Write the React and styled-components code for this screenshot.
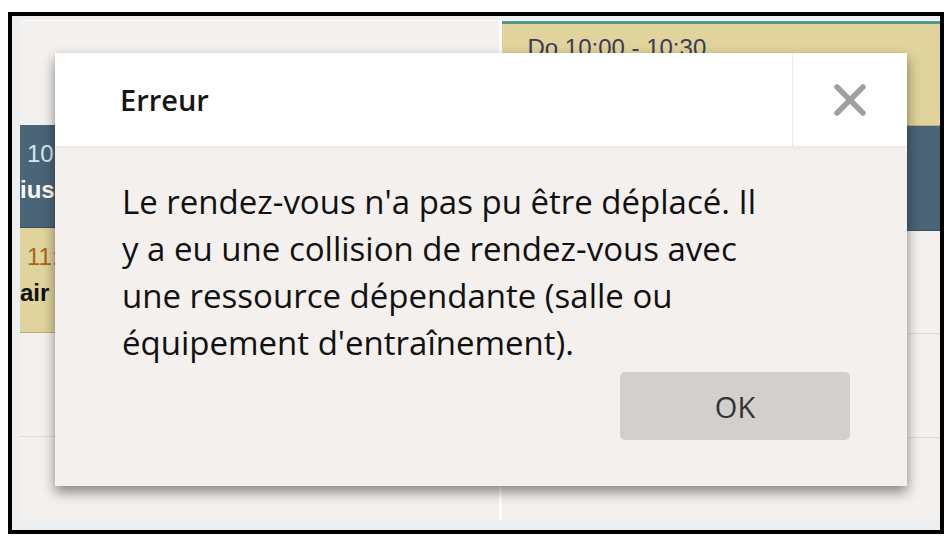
import React from "react";
import styled, { createGlobalStyle } from "styled-components";

const GlobalStyle = createGlobalStyle`
  body {
    margin: 0;
    background: #ffffff;
    font-family: "Open Sans", "Liberation Sans", sans-serif;
  }
`;

const Page = styled.div`
  position: relative;
  width: 952px;
  height: 550px;
  padding: 12px 0 0 8px;
  box-sizing: border-box;
`;

const Frame = styled.div`
  width: 936px;
  height: 522px;
  box-sizing: border-box;
  border: 4px solid #000;
  background: #eceef0;
  padding: 4px 0 10px 8px;
  display: flex;
`;

const Column = styled.div`
  width: ${(p) => p.width}px;
  display: flex;
  flex-direction: column;
  background: #f3f0ed;
  border-left: ${(p) => (p.divider ? "3px solid #ffffff" : "none")};
  border-top: 1px solid #fbfaf9;
  overflow: hidden;
`;

const Slot = styled.div`
  height: ${(p) => p.h}px;
  flex: ${(p) => (p.fill ? 1 : "none")};
  border-bottom: ${(p) => (p.line ? "1px solid #dedad7" : "none")};
  box-sizing: border-box;
`;

const Event = styled.div`
  height: ${(p) => p.h}px;
  box-sizing: border-box;
  background: ${(p) => (p.tone === "blue" ? "#4a6478" : "#e0d39b")};
  border-top: ${(p) => (p.accent ? "3px solid #4f9a8c" : "none")};
  border-bottom: 1px solid
    ${(p) => (p.tone === "blue" ? "#3a4f60" : "#bcae72")};
  padding: ${(p) => (p.accent ? "12px 0 0 25px" : "17px 0 0 0")};
  display: flex;
  flex-direction: column;
  gap: 12px;
  font-family: "Liberation Sans", Arial, sans-serif;
`;

const EventTime = styled.span`
  font-size: 24px;
  line-height: 1;
  color: ${(p) => p.color};
  padding-left: ${(p) => (p.large ? 0 : 7)}px;
  white-space: nowrap;
`;

const EventName = styled.span`
  font-size: 24px;
  font-weight: 700;
  line-height: 1;
  color: ${(p) => p.color};
  white-space: nowrap;
`;

const Dialog = styled.div`
  position: absolute;
  left: 55px;
  top: 53px;
  width: 852px;
  height: 433px;
  background: #f3f0ed;
  box-shadow: 0 6px 12px rgba(0, 0, 0, 0.45);
  display: flex;
  flex-direction: column;
`;

const Header = styled.div`
  height: 93px;
  display: flex;
  background: #ffffff;
  box-shadow: 0 2px 4px rgba(0, 0, 0, 0.04);
  position: relative;
`;

const Title = styled.h2`
  flex: 1;
  margin: 0;
  padding-left: 65px;
  font-family: "Open Sans", sans-serif;
  font-weight: 600;
  font-size: 29px;
  line-height: 93px;
  color: #151515;
`;

const CloseButton = styled.button`
  width: 115px;
  border: 0;
  border-left: 1px solid #e8e8e8;
  background: #ffffff;
  display: grid;
  place-content: center;
  padding: 0;
`;

const Body = styled.div`
  flex: 1;
  padding: 32px 57px 46px 67px;
  display: flex;
  flex-direction: column;
`;

const Message = styled.p`
  margin: 0;
  font-family: "Open Sans", sans-serif;
  font-size: 33px;
  line-height: 47px;
  color: #111111;
`;

const Footer = styled.div`
  margin-top: auto;
  display: flex;
  justify-content: flex-end;
`;

const OkButton = styled.button`
  width: 230px;
  height: 68px;
  border: 0;
  border-radius: 5px;
  background: #d3cfcc;
  font-family: "Open Sans", sans-serif;
  font-size: 29px;
  color: #333333;
`;

const CloseIcon = () => (
  <svg width="36" height="34" viewBox="0 0 36 34">
    <path
      d="M5 4 L31 30 M31 4 L5 30"
      stroke="#a0a0a0"
      strokeWidth="5.5"
      strokeLinecap="round"
      fill="none"
    />
  </svg>
);

export default function App() {
  return (
    <Page>
      <GlobalStyle />
      <Frame>
        <Column width={481}>
          <Slot h={104} />
          <Event h={103} tone="blue">
            <EventTime color="#d6e6f2">10:00</EventTime>
            <EventName color="#ffffff">ius</EventName>
          </Event>
          <Event h={105} tone="yellow">
            <EventTime color="#b0601c">11:00</EventTime>
            <EventName color="#111111">air</EventName>
          </Event>
          <Slot h={104} line />
          <Slot fill />
        </Column>
        <Column width={439} divider>
          <Event h={105} tone="yellow" accent>
            <EventTime large color="#3e3a58">
              Do 10:00 - 10:30
            </EventTime>
          </Event>
          <Event h={105} tone="blue" />
          <Slot h={103} line />
          <Slot h={104} line />
          <Slot fill />
        </Column>
      </Frame>

      <Dialog>
        <Header>
          <Title>Erreur</Title>
          <CloseButton aria-label="Fermer">
            <CloseIcon />
          </CloseButton>
        </Header>
        <Body>
          <Message>
            Le rendez-vous n'a pas pu être déplacé. Il
            <br />
            y a eu une collision de rendez-vous avec
            <br />
            une ressource dépendante (salle ou
            <br />
            équipement d'entraînement).
          </Message>
          <Footer>
            <OkButton>OK</OkButton>
          </Footer>
        </Body>
      </Dialog>
    </Page>
  );
}
